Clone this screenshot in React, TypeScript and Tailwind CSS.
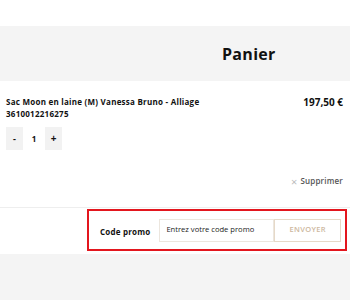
import React from 'react';

const App: React.FC = () => {
  return (
    <div className="w-[350px] h-[300px] bg-[#f4f4f4] overflow-hidden text-[#111]" style={{ fontFamily: '"Open Sans", "Noto Sans", sans-serif' }}>
      <div className="h-[26px] bg-white" />

      {/* Title band */}
      <div className="h-[55px] bg-[#f4f4f4] flex items-center pl-[222px]">
        <h1 className="text-[16px] font-bold tracking-[0.3px] leading-none">Panier</h1>
      </div>

      {/* Cart line */}
      <div className="bg-white px-[6px] pt-[15px] h-[127px] border-b border-[#eeeeee]">
        <div className="flex justify-between items-start">
          <div>
            <p className="text-[8px] font-bold leading-[12px] tracking-[0.25px]">Sac Moon en laine (M) Vanessa Bruno - Alliage</p>
            <p className="text-[8px] font-bold leading-[12px] tracking-[0.25px]">3610012216275</p>
          </div>
          <span className="text-[10px] font-bold leading-[12px] pr-[1px]">197,50 €</span>
        </div>

        <div className="flex items-center mt-[7px] h-[23px]">
          <button className="w-[17px] h-[23px] bg-[#f2f2f2] text-[9px] font-bold flex items-center justify-center">-</button>
          <span className="w-[22px] text-center text-[8px] font-bold">1</span>
          <button className="w-[17px] h-[23px] bg-[#f2f2f2] text-[10px] font-bold flex items-center justify-center">+</button>
        </div>

        <div className="flex justify-end items-center mt-[25px] gap-[3px] pr-[1px]">
          <span className="text-[11px] text-[#bbbbbb] leading-none">×</span>
          <span className="text-[8px] font-semibold text-[#555] tracking-[0.2px]">Supprimer</span>
        </div>
      </div>

      {/* Promo */}
      <div className="bg-white h-[46px] pl-[87px] pr-[3px] pt-[1px]">
        <div className="h-[42px] border-2 border-[#e3161e] flex items-center pl-[11px] pr-[4px]">
          <span className="text-[8px] font-bold mr-[9px] mt-[3px] tracking-[0.2px]">Code promo</span>
          <div className="flex h-[23px] flex-1">
            <div className="w-[115px] border border-[#ece6de] flex items-center pl-[6px] text-[7.6px] text-[#222]">
              Entrez votre code promo
            </div>
            <button className="flex-1 border border-[#e6d9c8] text-[7.5px] font-semibold text-[#cdb79e] tracking-[0.3px]">
              ENVOYER
            </button>
          </div>
        </div>
      </div>
    </div>
  );
};

export default App;
